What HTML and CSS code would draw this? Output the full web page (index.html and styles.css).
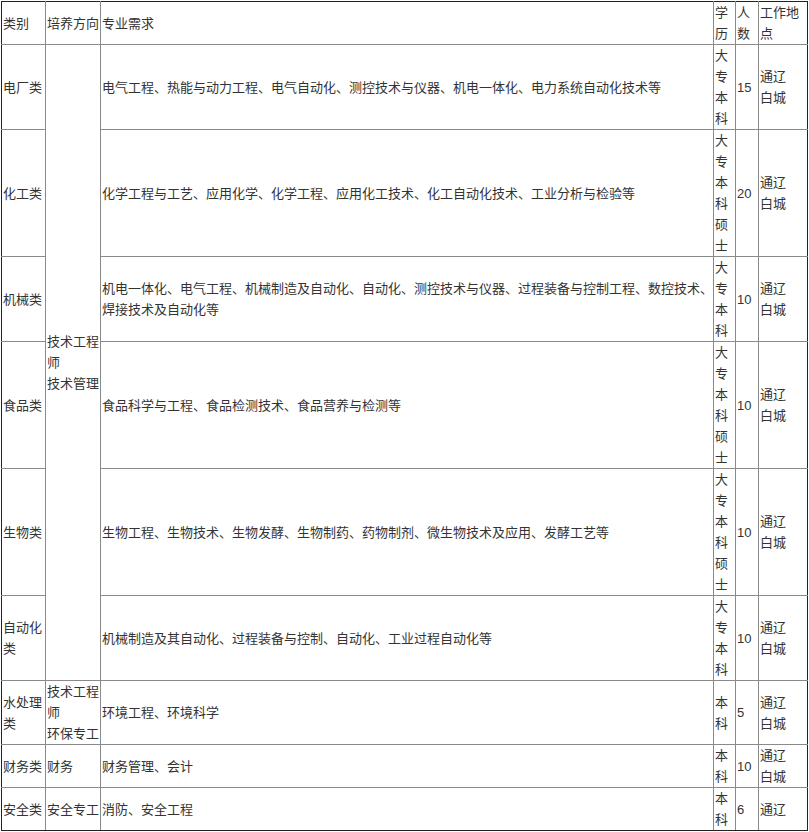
FILE: index.html
```html
<!DOCTYPE html>
<html lang="zh">
<head>
<meta charset="utf-8">
<title>招聘需求</title>
<link rel="stylesheet" href="styles.css">
</head>
<body>
<table class="jobs">
  <colgroup>
    <col class="c-cat">
    <col class="c-dir">
    <col class="c-major">
    <col class="c-edu">
    <col class="c-num">
    <col class="c-place">
  </colgroup>
  <tr class="head">
    <td>类别</td>
    <td>培养方向</td>
    <td>专业需求</td>
    <td>学历</td>
    <td>人数</td>
    <td>工作地点</td>
  </tr>
  <tr>
    <td>电厂类</td>
    <td rowspan="6">技术工程师<br>技术管理</td>
    <td>电气工程、热能与动力工程、电气自动化、测控技术与仪器、机电一体化、电力系统自动化技术等</td>
    <td>大专本科</td>
    <td>15</td>
    <td>通辽<br>白城</td>
  </tr>
  <tr>
    <td>化工类</td>
    <td>化学工程与工艺、应用化学、化学工程、应用化工技术、化工自动化技术、工业分析与检验等</td>
    <td>大专本科硕士</td>
    <td>20</td>
    <td>通辽<br>白城</td>
  </tr>
  <tr>
    <td>机械类</td>
    <td>机电一体化、电气工程、机械制造及自动化、自动化、测控技术与仪器、过程装备与控制工程、数控技术、焊接技术及自动化等</td>
    <td>大专本科</td>
    <td>10</td>
    <td>通辽<br>白城</td>
  </tr>
  <tr>
    <td>食品类</td>
    <td>食品科学与工程、食品检测技术、食品营养与检测等</td>
    <td>大专本科硕士</td>
    <td>10</td>
    <td>通辽<br>白城</td>
  </tr>
  <tr>
    <td>生物类</td>
    <td>生物工程、生物技术、生物发酵、生物制药、药物制剂、微生物技术及应用、发酵工艺等</td>
    <td>大专本科硕士</td>
    <td>10</td>
    <td>通辽<br>白城</td>
  </tr>
  <tr>
    <td>自动化类</td>
    <td>机械制造及其自动化、过程装备与控制、自动化、工业过程自动化等</td>
    <td>大专本科</td>
    <td>10</td>
    <td>通辽<br>白城</td>
  </tr>
  <tr>
    <td>水处理类</td>
    <td>技术工程师<br>环保专工</td>
    <td>环境工程、环境科学</td>
    <td>本科</td>
    <td>5</td>
    <td>通辽<br>白城</td>
  </tr>
  <tr>
    <td>财务类</td>
    <td>财务</td>
    <td>财务管理、会计</td>
    <td>本科</td>
    <td>10</td>
    <td>通辽<br>白城</td>
  </tr>
  <tr>
    <td>安全类</td>
    <td>安全专工</td>
    <td>消防、安全工程</td>
    <td>本科</td>
    <td>6</td>
    <td>通辽</td>
  </tr>
</table>
</body>
</html>
```

FILE: styles.css
```css
html, body {
  margin: 0;
  padding: 0;
  background: #ffffff;
}

body {
  padding: 1px 0 0 1px;
  font-family: "Liberation Sans", "Noto Sans CJK SC", sans-serif;
  font-size: 13px;
  color: #333333;
}

.jobs {
  border-collapse: collapse;
  table-layout: fixed;
  width: 806px;
}

.c-cat { width: 44px; }
.c-dir { width: 55px; }
.c-major { width: 613px; }
.c-edu { width: 22px; }
.c-num { width: 23px; }
.c-place { width: 49px; }

.jobs td {
  border: 1px solid #8a8a8a;
  padding: 0 0 0 1px;
  line-height: 21px;
  vertical-align: middle;
  text-align: left;
  word-break: break-all;
}

.jobs tr > td:first-child { border-left-color: #222222; }
.jobs tr > td:last-child { border-right-color: #222222; }
.jobs tr.head > td { border-top-color: #222222; }
.jobs tr:last-child > td { border-bottom-color: #222222; }
```
